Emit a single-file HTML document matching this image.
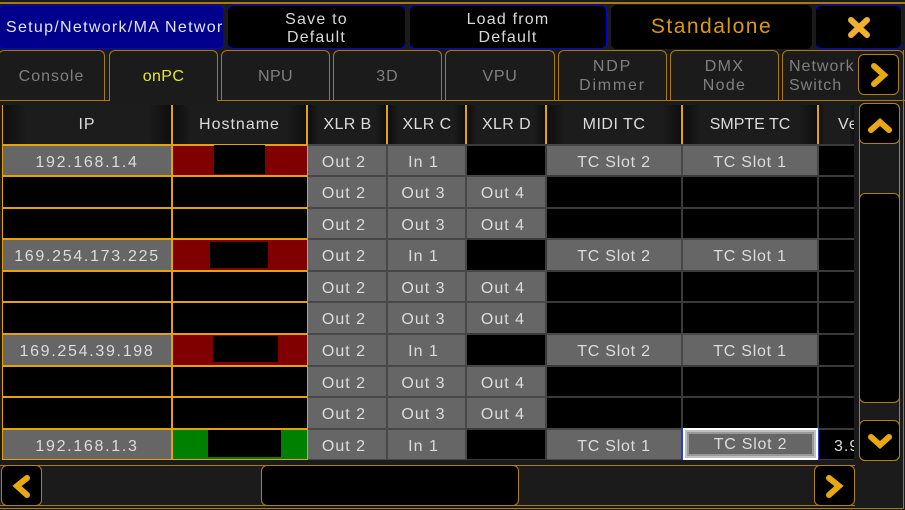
<!DOCTYPE html>
<html><head><meta charset="utf-8"><style>
html,body{margin:0;padding:0;background:#1b1b1b}
#r{position:relative;width:905px;height:510px;overflow:hidden;background:#1b1b1b;font:16px "Liberation Sans",sans-serif;letter-spacing:1px;color:#d8d8d8}
#r div{position:absolute;box-sizing:border-box;display:flex;align-items:center;justify-content:center;text-align:center;line-height:18px;white-space:nowrap}
.b{background:#000;border:1px solid #0000e0;border-radius:6px;padding-top:3px;letter-spacing:1.2px;top:5px;height:44px}
.t{border:1px solid #a87a10;border-bottom:0;border-radius:6px 6px 0 0;color:#808080;background:#1b1b1b;top:50px;height:50px;padding-top:1px;line-height:19px!important}
.h{background:linear-gradient(90deg,#0e0e0e,#1c1c1c 14%,#1c1c1c 86%,#0e0e0e);border-right:2px solid #e2a208;top:105px;height:40px;color:#dcdcdc}
.g,.k,.i,.o,.a,.c{top:0;height:100%;border-style:solid;border-width:2px 0}
.g{background:#666;border-color:#474747;border-right:2px solid #474747;color:#dcdcdc;letter-spacing:.75px;padding-top:4px}
.k{background:#000;border-color:#3a3a3a;border-right:2px solid #3a3a3a}
.s{padding-right:6px;letter-spacing:1px}
.i,.o,.a,.c{border-color:#e2a208;border-left:1px solid #e2a208;border-right:1px solid #e2a208}
.i{background:#666;left:2px;width:170px;color:#dcdcdc;letter-spacing:1.7px;padding-top:4px}
.o{background:#000}
.a{background:#800000;left:171px;width:137px;border-left-width:2px}
.c{background:#008000;left:171px;width:137px;border-left-width:2px}
.l{left:2px;width:170px}
.m{left:171px;width:137px;border-left-width:2px}
.x{background:#000;z-index:1}
.B{left:308px;width:80px}.C{left:388px;width:79px}.D{left:467px;width:80px}.M{left:547px;width:136px}.S{left:683px;width:136px}.V{left:819px;width:35px;border-right:0!important}
.n{background:#000;border:1px solid #b08010;border-radius:6px}
svg{position:absolute;overflow:visible}
path{stroke:#e8a810;stroke-width:6;fill:none;stroke-linecap:round}
</style></head><body><div id="r">
<div style="left:0;top:2px;width:905px;height:2px;background:#a87a10"></div>
<div class="b" style="left:-2px;width:226px;background:#00008c;color:#e4e4f4;justify-content:flex-start;padding:2px 0 0 7px;letter-spacing:1.3px;overflow:hidden">Setup/Network/MA Networ</div>
<div class="b" style="left:227px;width:179px">Save to<br>Default</div>
<div class="b" style="left:409px;width:198px">Load from<br>Default</div>
<div style="left:611px;top:5px;width:201px;height:44px;background:#000;border-radius:6px;color:#d89a10;font-size:21px;letter-spacing:1.5px">Standalone</div>
<div class="b" style="left:815px;width:87px"></div>
<svg style="left:0;top:0;z-index:3" width="905" height="510"><path d="M851 20L867 35M867 20L851 35" style="stroke:#f0b030"/></svg>

<div style="left:0;top:100px;width:905px;height:1px;background:#a87a10"></div>
<div class="t" style="left:-2px;width:107px">Console</div>
<div class="t" style="left:109px;width:109px;height:51px;color:#e8e820;z-index:1;letter-spacing:.4px">onPC</div>
<div class="t" style="left:221px;width:109px;letter-spacing:.4px">NPU</div>
<div class="t" style="left:333px;width:109px">3D</div>
<div class="t" style="left:445px;width:110px;letter-spacing:.7px">VPU</div>
<div class="t" style="left:558px;width:109px;letter-spacing:1.8px">NDP<br>Dimmer</div>
<div class="t" style="left:670px;width:109px;letter-spacing:1.3px">DMX<br>Node</div>
<div class="t" style="left:782px;width:122px;justify-content:flex-start;padding-left:6px;text-align:left">Network<br>Switch</div>
<div class="n" style="left:858px;top:54px;width:41px;height:41px;z-index:2"></div>
<svg style="left:0;top:0;z-index:3" width="905" height="510"><path d="M874 66L884 75L874 84"/></svg>

<div class="h" style="left:2px;width:171px;border-left:1px solid #e2a208">IP</div>
<div class="h" style="left:173px;width:135px">Hostname</div>
<div class="h" style="left:308px;width:80px;letter-spacing:.4px;padding-left:1px">XLR B</div>
<div class="h" style="left:388px;width:79px;letter-spacing:.4px;padding-left:1px">XLR C</div>
<div class="h" style="left:467px;width:80px;letter-spacing:.4px;padding-left:1px">XLR D</div>
<div class="h" style="left:547px;width:136px;letter-spacing:.5px">MIDI TC</div>
<div class="h" style="left:683px;width:136px;letter-spacing:0">SMPTE TC</div>
<div class="h" style="left:819px;width:35px;border-right:0;overflow:hidden;justify-content:flex-start;padding-left:19px">Ve</div>

<div style="left:0;top:144px;width:854px;height:33px">
<div class="i">192.168.1.4</div><div class="a"></div><div class="x" style="left:214px;top:1px;width:51px;height:29px"></div>
<div class="g s B">Out 2</div><div class="g s C">In 1</div><div class="k D"></div><div class="g M">TC Slot 2</div><div class="g S">TC Slot 1</div><div class="k V"></div></div>

<div style="left:0;top:175px;width:854px;height:34px">
<div class="o l"></div><div class="o m"></div>
<div class="g s B">Out 2</div><div class="g s C">Out 3</div><div class="g s D">Out 4</div><div class="k M"></div><div class="k S"></div><div class="k V"></div></div>

<div style="left:0;top:207px;width:854px;height:33px">
<div class="o l"></div><div class="o m"></div>
<div class="g s B">Out 2</div><div class="g s C">Out 3</div><div class="g s D">Out 4</div><div class="k M"></div><div class="k S"></div><div class="k V"></div></div>

<div style="left:0;top:238px;width:854px;height:34px">
<div class="i">169.254.173.225</div><div class="a"></div><div class="x" style="left:210px;top:4px;width:58px;height:26px"></div>
<div class="g s B">Out 2</div><div class="g s C">In 1</div><div class="k D"></div><div class="g M">TC Slot 2</div><div class="g S">TC Slot 1</div><div class="k V"></div></div>

<div style="left:0;top:270px;width:854px;height:33px">
<div class="o l"></div><div class="o m"></div>
<div class="g s B">Out 2</div><div class="g s C">Out 3</div><div class="g s D">Out 4</div><div class="k M"></div><div class="k S"></div><div class="k V"></div></div>

<div style="left:0;top:301px;width:854px;height:34px">
<div class="o l"></div><div class="o m"></div>
<div class="g s B">Out 2</div><div class="g s C">Out 3</div><div class="g s D">Out 4</div><div class="k M"></div><div class="k S"></div><div class="k V"></div></div>

<div style="left:0;top:333px;width:854px;height:34px">
<div class="i">169.254.39.198</div><div class="a"></div><div class="x" style="left:213px;top:3px;width:65px;height:26px"></div>
<div class="g s B">Out 2</div><div class="g s C">In 1</div><div class="k D"></div><div class="g M">TC Slot 2</div><div class="g S">TC Slot 1</div><div class="k V"></div></div>

<div style="left:0;top:365px;width:854px;height:33px">
<div class="o l"></div><div class="o m"></div>
<div class="g s B">Out 2</div><div class="g s C">Out 3</div><div class="g s D">Out 4</div><div class="k M"></div><div class="k S"></div><div class="k V"></div></div>

<div style="left:0;top:396px;width:854px;height:34px">
<div class="o l"></div><div class="o m"></div>
<div class="g s B">Out 2</div><div class="g s C">Out 3</div><div class="g s D">Out 4</div><div class="k M"></div><div class="k S"></div><div class="k V"></div></div>

<div style="left:0;top:428px;width:854px;height:33px;overflow:hidden">
<div class="i">192.168.1.3</div><div class="c"></div><div class="x" style="left:208px;top:2px;width:73px;height:27px"></div>
<div class="g s B">Out 2</div><div class="g s C">In 1</div><div class="k D"></div><div class="g M">TC Slot 1</div>
<div style="left:682px;top:0;width:137px;height:32px;background:#666;border-left:1px solid #2040e0;border-right:1px solid #2040e0;box-shadow:inset 0 0 0 2px #fff,inset 0 0 0 4px #c0c0c0,inset 0 0 0 6px #999;color:#dcdcdc;letter-spacing:.75px;padding-top:2px">TC Slot 2</div>
<div class="k V" style="justify-content:flex-start;padding:4px 0 0 15px;overflow:hidden;color:#dcdcdc;letter-spacing:1px">3.9</div></div>

<div style="left:0;top:460px;width:854px;height:5px;background:#1b1b1b"></div>

<div style="left:859px;top:103px;width:41px;height:358px;border:1px solid #b08010;border-radius:6px;background:#1b1b1b"></div>
<div class="n" style="left:859px;top:103px;width:41px;height:41px"></div>
<div class="n" style="left:859px;top:193px;width:41px;height:210px"></div>
<div class="n" style="left:859px;top:420px;width:41px;height:41px"></div>
<svg style="left:0;top:0" width="905" height="510"><path d="M871 130L880 122L889 130"/><path d="M871 437L880 445L889 437"/></svg>

<div style="left:0;top:465px;width:855px;height:41px;border-top:1px solid #a87a10;border-bottom:1px solid #a87a10;background:#1b1b1b"></div>
<div class="n" style="left:1px;top:465px;width:41px;height:41px"></div>
<div class="n" style="left:261px;top:465px;width:258px;height:41px"></div>
<div class="n" style="left:814px;top:465px;width:41px;height:41px"></div>
<svg style="left:0;top:0" width="905" height="510"><path d="M27 478L17 486L27 495"/><path d="M829 478L839 486L829 495"/></svg>
<div style="left:0;top:508px;width:904px;height:1px;background:#a87a10"></div>
<div style="left:903px;top:50px;width:1px;height:459px;background:#a87a10"></div>
</div></body></html>
